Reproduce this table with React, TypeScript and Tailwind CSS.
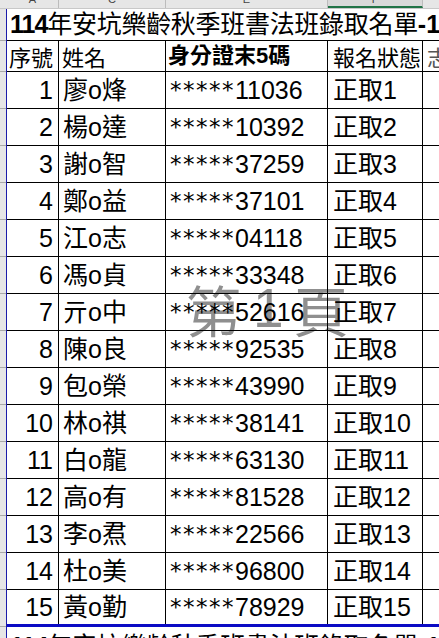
const rows = [
  { no: 1, name: "廖o烽", id: "11036" },
  { no: 2, name: "楊o達", id: "10392" },
  { no: 3, name: "謝o智", id: "37259" },
  { no: 4, name: "鄭o益", id: "37101" },
  { no: 5, name: "江o志", id: "04118" },
  { no: 6, name: "馮o貞", id: "33348" },
  { no: 7, name: "亓o中", id: "52616" },
  { no: 8, name: "陳o良", id: "92535" },
  { no: 9, name: "包o榮", id: "43990" },
  { no: 10, name: "林o祺", id: "38141" },
  { no: 11, name: "白o龍", id: "63130" },
  { no: 12, name: "高o有", id: "81528" },
  { no: 13, name: "李o焄", id: "22566" },
  { no: 14, name: "杜o美", id: "96800" },
  { no: 15, name: "黃o勤", id: "78929" },
];

const Gutter = ({ tick = true }: { tick?: boolean }) => (
  <>
    <div className={`w-[6px] shrink-0 bg-[#e6e6e6] ${tick ? "border-b border-[#a8a8a8]" : ""}`} />
    <div className="w-px shrink-0 bg-[#1c1caa]" />
  </>
);

const Title = ({ top = false }: { top?: boolean }) => (
  <div
    className={`flex-1 whitespace-nowrap overflow-hidden pl-[3px] text-[25px] leading-none flex ${
      top ? "items-center" : "items-start pt-[7px]"
    }`}
  >
    <span className="font-bold tracking-[-1px]">114</span>
    <span className="tracking-[-0.3px]">年安坑樂齡秋季班書法班錄取名單</span>
    <span className="font-bold">-1</span>
  </div>
);

export default function App() {
  return (
    <div className="relative w-[439px] h-[638px] overflow-hidden bg-white text-black font-['Liberation_Sans','Noto_Sans_CJK_TC',sans-serif]">
      {/* page watermark */}
      <div className="absolute left-[186px] top-[281px] flex items-center text-[55px] leading-none text-[#8f8f8f] font-['Noto_Sans_CJK_TC',sans-serif]">
        <span>第</span>
        <span className="ml-[12px] font-['Liberation_Sans',sans-serif]">1</span>
        <span className="ml-[10px]">頁</span>
      </div>

      <div className="relative z-[1]">
        {/* column headers */}
        <div className="flex h-[9px] bg-[#e6e6e6] text-[11px] text-[#444] border-b border-[#c8c8c8]">
          <div className="w-[7px] shrink-0" />
          {[
            { l: "A", w: "w-[52px]" },
            { l: "C", w: "w-[107px]" },
            { l: "E", w: "w-[162px]" },
          ].map((c) => (
            <div key={c.l} className={`${c.w} shrink-0 border-r border-[#bcbcbc] flex justify-center overflow-hidden`}>
              <span className="leading-none -mt-[6px]">{c.l}</span>
            </div>
          ))}
          <div className="w-[95px] shrink-0 border-r border-[#bcbcbc] border-b-2 border-b-[#217346] bg-[#d9d9d9] flex justify-center overflow-hidden">
            <span className="leading-none -mt-[6px]">F</span>
          </div>
          <div className="flex-1" />
        </div>

        {/* title row */}
        <div className="flex h-[32px]">
          <Gutter />
          <div className="flex flex-1 border-b border-black">
            <Title top />
          </div>
        </div>

        {/* header row */}
        <div className="flex h-[31px] text-[22px] leading-none">
          <Gutter />
          <div className="flex flex-1 border-b border-black">
            <div className="w-[52px] shrink-0 border-r border-black flex items-center pl-[2px] font-['Noto_Sans_CJK_TC',sans-serif]">序號</div>
            <div className="w-[107px] shrink-0 border-r border-black flex items-center pl-[3px] font-['Noto_Sans_CJK_TC',sans-serif]">姓名</div>
            <div className="w-[162px] shrink-0 border-r border-black flex items-center pl-[2px] font-bold">身分證末5碼</div>
            <div className="w-[95px] shrink-0 border-r border-black flex items-center pl-[5px] font-['Noto_Sans_CJK_TC',sans-serif]">報名狀態</div>
            <div className="flex-1 flex items-center pl-[4px] whitespace-nowrap overflow-hidden text-[#555] font-['Noto_Sans_CJK_TC',sans-serif]">志願</div>
          </div>
        </div>

        {/* data rows */}
        {rows.map((r, i) => {
          const last = i === rows.length - 1;
          return (
            <div key={r.no} className="flex h-[37px] text-[25px] leading-none">
              <Gutter />
              <div className={`flex flex-1 ${last ? "border-b-[3px] border-[#0b0bc4]" : "border-b border-black"}`}>
                <div className="w-[52px] shrink-0 border-r border-black flex items-center justify-end pr-[5px]">{r.no}</div>
                <div className="w-[107px] shrink-0 border-r border-black flex items-center pl-[4px]">{r.name}</div>
                <div className="w-[162px] shrink-0 border-r border-black flex items-center pl-[4px]">
                  <span className="font-['DejaVu_Sans',sans-serif] text-[23px] tracking-[1.5px]">*****</span>
                  <span>{r.id}</span>
                </div>
                <div className="w-[95px] shrink-0 border-r border-black flex items-center pl-[5px] whitespace-nowrap">正取{r.no}</div>
                <div className="flex-1" />
              </div>
            </div>
          );
        })}

        {/* next page starts */}
        <div className="flex h-[32px]">
          <Gutter tick={false} />
          <div className="flex flex-1">
            <Title />
          </div>
        </div>
      </div>
    </div>
  );
}
